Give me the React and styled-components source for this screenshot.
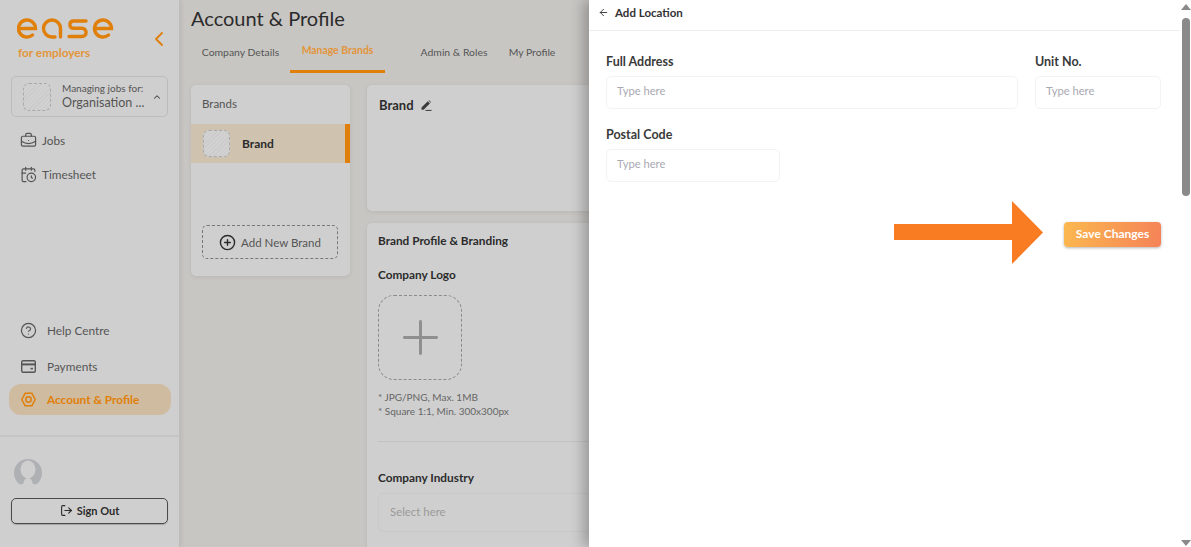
import styled, { createGlobalStyle } from "styled-components";
import { ArrowLeft, BriefcaseBusiness, CalendarClock, ChevronLeft, ChevronUp, CircleHelp, CirclePlus, LogOut, Plus } from "lucide-react";

const GlobalStyle = createGlobalStyle`
    html, body {
        margin: 0;
        height: 100%;
        overflow: hidden;
    }
    body {
        font-family: "Lato", "Noto Sans", "Liberation Sans", sans-serif;
        color: #2b2b2b;
    }
    * {
        box-sizing: border-box;
    }
`;

const Page = styled.div`
    position: relative;
    display: flex;
    width: 100%;
    height: 100vh;
    overflow: hidden;
    background: #c8c6c3;
`;

const Sidebar = styled.aside`
    flex: 0 0 180px;
    min-width: 0;
    display: flex;
    flex-direction: column;
    background: #cfcfcf;
    border-right: 1px solid #bdbdbd;
    box-shadow: 2px 0 4px rgba(0, 0, 0, 0.06);
`;

const LogoArea = styled.div`
    display: flex;
    justify-content: space-between;
    align-items: flex-start;
    height: 76px;
    padding: 18px 8px 0 17px;
`;

const LogoText = styled.div`
    display: flex;
    flex-direction: column;
    gap: 7px;
`;

const LogoSub = styled.div`
    font-size: 11.8px;
    line-height: 14px;
    font-weight: 700;
    color: #e2953a;
    margin-left: 1px;
`;

const CollapseButton = styled.div`
    display: flex;
    color: #e07f0a;
    margin-top: 9px;
`;

const OrgCard = styled.div`
    display: flex;
    align-items: center;
    gap: 11px;
    height: 41px;
    margin: 0 11px;
    padding: 0 5px 0 11px;
    border: 1px solid #bcbcbc;
    border-radius: 5px;
`;

const Placeholder = styled.div`
    flex: none;
    width: ${(p) => p.size}px;
    height: ${(p) => p.size}px;
    border: 1px dashed #a9a9a9;
    border-radius: 6px;
    background: repeating-linear-gradient(135deg, #cbcbcb 0 1px, #d1d1d1 1px 3px);
`;

const OrgText = styled.div`
    flex: 1;
    min-width: 0;
    padding-bottom: 2px;
    white-space: nowrap;
    color: #555;
`;

const OrgLabel = styled.div`
    font-size: 10px;
    line-height: 13px;
`;

const OrgName = styled.div`
    font-size: 12.5px;
    line-height: 15px;
`;

const NavList = styled.nav`
    display: flex;
    flex-direction: column;
    margin-top: ${(p) => p.top}px;
`;

const NavItem = styled.div`
    display: flex;
    align-items: center;
    gap: ${(p) => p.gap}px;
    height: ${(p) => p.height}px;
    margin: 0 8px 0 9px;
    padding-left: 11px;
    border-radius: 12px;
    font-size: 11.8px;
    font-weight: ${(p) => (p.active ? 700 : 400)};
    color: ${(p) => (p.active ? "#e07f0a" : "#555")};
    background: ${(p) => (p.active ? "#cfbb9f" : "transparent")};
`;

const UserArea = styled.div`
    margin-top: 20px;
    padding: 22px 11px 0 11px;
    border-top: 2px solid #c5c5c5;
`;

const Avatar = styled.div`
    display: flex;
    width: 28px;
    height: 28px;
    margin-left: 3px;
    margin-bottom: 11px;
    border-radius: 50%;
    overflow: hidden;
`;

const SignOut = styled.div`
    display: flex;
    align-items: center;
    justify-content: center;
    gap: 4px;
    height: 26px;
    padding-bottom: 1px;
    border: 1px solid #4a4a4a;
    border-radius: 5px;
    box-shadow: 0 1px 1px rgba(0, 0, 0, 0.2);
    font-size: 11px;
    font-weight: 700;
    color: #2b2b2b;
`;

const Main = styled.main`
    flex: 0 0 700px;
    padding: 6px 0 0 11px;
`;

const Title = styled.h1`
    margin: 0;
    font-size: 20px;
    font-weight: 400;
    line-height: 24px;
    color: #2b2b2b;
`;

const Tabs = styled.div`
    display: flex;
    height: 43px;
    margin-bottom: 12px;
`;

const Tab = styled.div`
    display: flex;
    justify-content: center;
    width: ${(p) => p.width}px;
    margin-left: ${(p) => p.left || 0}px;
    padding-top: ${(p) => (p.active ? 14 : 16)}px;
    border-bottom: 3px solid ${(p) => (p.active ? "#e07f0a" : "transparent")};
    font-size: 10.4px;
    white-space: nowrap;
    font-weight: ${(p) => (p.active ? 700 : 400)};
    color: ${(p) => (p.active ? "#e2953a" : "#555")};
`;

const Columns = styled.div`
    display: flex;
    gap: 17px;
    align-items: flex-start;
`;

const BrandsCard = styled.section`
    display: flex;
    flex-direction: column;
    flex: 0 0 159px;
    height: 191px;
    border-radius: 5px;
    background: #cfcfcf;
    box-shadow: 0 1px 4px rgba(0, 0, 0, 0.08);
`;

const BrandsTitle = styled.div`
    height: 39px;
    padding: 12px 0 0 11px;
    font-size: 11.5px;
    color: #555;
`;

const BrandRow = styled.div`
    display: flex;
    align-items: center;
    gap: 12px;
    height: 39px;
    padding-left: 12px;
    border-right: 5px solid #e07f0a;
    background: #cfc3b0;
    font-size: 12px;
    font-weight: 700;
`;

const AddBrand = styled.div`
    display: flex;
    align-items: center;
    justify-content: center;
    gap: 5px;
    height: 34px;
    margin: auto 12px 17px 11px;
    border: 1.5px dashed #777;
    border-radius: 5px;
    font-size: 11.5px;
    color: #555;
`;

const RightColumn = styled.div`
    flex: 1;
    display: flex;
    flex-direction: column;
    gap: 12px;
`;

const Card = styled.section`
    padding: ${(p) => p.pad}px 12px 0 11px;
    height: ${(p) => p.height}px;
    border-radius: 5px;
    background: #cfcfcf;
    box-shadow: 0 1px 4px rgba(0, 0, 0, 0.08);
`;

const BrandName = styled.div`
    display: flex;
    align-items: center;
    gap: 7px;
    padding-left: 1px;
    font-size: 13px;
    font-weight: 700;
`;

const SectionTitle = styled.div`
    margin-bottom: ${(p) => p.bottom}px;
    font-size: 11.8px;
    line-height: 14px;
    font-weight: 700;
`;

const Upload = styled.div`
    display: flex;
    align-items: center;
    justify-content: center;
    width: 84px;
    height: 85px;
    border: 1.5px dashed #8a8a8a;
    border-radius: 16px;
    color: #8f8f8f;
`;

const Hint = styled.div`
    margin-top: 10px;
    font-size: 10px;
    line-height: 14px;
    color: #666;
`;

const Divider = styled.div`
    height: 1px;
    margin: 23px 0 29px;
    background: #c2c2c2;
`;

const SelectBox = styled.div`
    display: flex;
    align-items: center;
    height: 39px;
    padding: 0 0 2px 11px;
    border: 1px solid #c9c9c9;
    border-radius: 5px;
    font-size: 11.4px;
    color: #9a9a9a;
`;

const Drawer = styled.aside`
    position: absolute;
    top: 0;
    right: 0;
    bottom: 0;
    width: 602px;
    display: flex;
    background: #fff;
    box-shadow: -6px 0 12px rgba(0, 0, 0, 0.25);
`;

const DrawerBody = styled.div`
    flex: 1;
    position: relative;
`;

const DrawerHeader = styled.header`
    display: flex;
    align-items: center;
    gap: 6px;
    height: 31px;
    padding: 0 0 5px 9px;
    border-bottom: 1px solid #eeeeee;
    font-size: 11.5px;
    font-weight: 700;
    color: #333;
`;

const Form = styled.div`
    display: flex;
    flex-direction: column;
    gap: 18px;
    padding: 23px 19px 0 17px;
`;

const FormRow = styled.div`
    display: flex;
    gap: 17px;
`;

const Field = styled.div`
    display: flex;
    flex-direction: column;
    gap: 7px;
    flex: ${(p) => (p.width ? `0 0 ${p.width}px` : 1)};
`;

const FieldLabel = styled.label`
    font-size: 12.5px;
    line-height: 15px;
    font-weight: 700;
    color: #3a3a3a;
`;

const FakeInput = styled.div`
    display: flex;
    align-items: center;
    height: 33px;
    padding: 0 0 4px 10px;
    border: 1px solid #f3f3f5;
    border-radius: 5px;
    font-size: 11.2px;
    color: #a9a9b2;
`;

const Actions = styled.div`
    display: flex;
    justify-content: flex-end;
    padding: 40px 19px 0 0;
`;

const SaveButton = styled.button`
    width: 97px;
    height: 25px;
    padding: 0 0 2px;
    border: none;
    border-radius: 4px;
    background: linear-gradient(100deg, #fbb84f, #f58258);
    box-shadow: 0 1px 3px rgba(0, 0, 0, 0.3);
    font: 700 12px "Lato", "Noto Sans", sans-serif;
    color: #fff;
`;

const PointerArrow = styled.svg`
    position: absolute;
    left: 305px;
    top: 201px;
`;

const Scrollbar = styled.div`
    flex: 0 0 11px;
    display: flex;
    flex-direction: column;
    align-items: center;
    padding: 4px 0 0;
    background: #fff;
`;

const ScrollUp = styled.div`
    width: 0;
    height: 0;
    border-left: 5px solid transparent;
    border-right: 5px solid transparent;
    border-bottom: 6px solid #8a8a8a;
`;

const ScrollDown = styled(ScrollUp)`
    margin-top: auto;
    margin-bottom: 1px;
    border-bottom: none;
    border-top: 6px solid #8a8a8a;
`;

const ScrollThumb = styled.div`
    width: 8px;
    height: 178px;
    margin-top: 8px;
    border-radius: 4px;
    background: #8a8a8a;
`;

const Logo = () => (
    <svg width="97" height="21" viewBox="0 0 97 21" fill="none" stroke="#e07f0a" strokeWidth="3.4" strokeLinecap="round">
        <path d="M2 10.5H18.5A8.5 8.5 0 1 0 15.5 17" />
        <path d="M43.5 19V10.5A8.5 8.5 0 1 0 35 19H38" />
        <path d="M69 3H56A3.7 3.7 0 0 0 56 10.3H65A3.9 3.9 0 0 1 65 18.5H52" />
        <path d="M77.5 10.5H94.5A8.5 8.5 0 1 0 91.5 17" />
    </svg>
);

const PaymentsIcon = () => (
    <svg width="17" height="17" viewBox="0 0 17 17" fill="none" stroke="currentColor" strokeWidth="1.4">
        <rect x="1.7" y="2.7" width="13.6" height="11.6" rx="1.5" />
        <path d="M1.7 6.4H15.3" strokeWidth="2" />
        <path d="M10.5 10.6H13" strokeWidth="1.6" />
    </svg>
);

const AccountIcon = () => (
    <svg width="17" height="17" viewBox="0 0 17 17" fill="none" stroke="currentColor" strokeWidth="1.5" strokeLinejoin="round">
        <path d="M5.2 2.2H11.8L15.2 8.5L11.8 14.8H5.2L1.8 8.5Z" />
        <circle cx="8.5" cy="8.5" r="2.7" />
    </svg>
);

const EditIcon = () => (
    <svg width="11" height="11" viewBox="0 0 11 11" fill="#3a3a3a">
        <path d="M0.5 7.6L6.8 1.3L8.9 3.4L2.6 9.7H0.5Z" />
        <path d="M7.5 0.6L8.1 0.2L10 2.1L9.6 2.7Z" />
        <rect x="4.5" y="9.9" width="6" height="1" />
    </svg>
);

const AvatarIcon = () => (
    <svg width="28" height="28" viewBox="0 0 28 28">
        <rect width="28" height="28" fill="#aeb0b3" />
        <ellipse cx="14" cy="10.5" rx="7.5" ry="9" fill="#cfcfcf" />
        <path d="M9 28C9 22 11 19 14 19S19 22 19 28Z" fill="#cfcfcf" />
        <rect y="25" width="28" height="3" fill="#cfcfcf" />
    </svg>
);

const App = () => {
    return (
        <>
            <GlobalStyle />
            <Page>
                <Sidebar>
                    <LogoArea>
                        <LogoText>
                            <Logo />
                            <LogoSub>for employers</LogoSub>
                        </LogoText>
                        <CollapseButton>
                            <ChevronLeft size={24} strokeWidth={1.8} />
                        </CollapseButton>
                    </LogoArea>
                    <OrgCard>
                        <Placeholder size={28} />
                        <OrgText>
                            <OrgLabel>Managing jobs for:</OrgLabel>
                            <OrgName>Organisation ...</OrgName>
                        </OrgText>
                        <ChevronUp size={10} strokeWidth={2.5} color="#444" />
                    </OrgCard>
                    <NavList top={6}>
                        <NavItem height={34} gap={5}>
                            <BriefcaseBusiness size={17} strokeWidth={1.7} />
                            Jobs
                        </NavItem>
                        <NavItem height={34} gap={5}>
                            <CalendarClock size={17} strokeWidth={1.7} />
                            Timesheet
                        </NavItem>
                    </NavList>
                    <NavList top={122}>
                        <NavItem height={35} gap={10}>
                            <CircleHelp size={17} strokeWidth={1.7} />
                            Help Centre
                        </NavItem>
                        <NavItem height={36} gap={10}>
                            <PaymentsIcon />
                            Payments
                        </NavItem>
                        <NavItem active height={31} gap={10}>
                            <AccountIcon />
                            Account & Profile
                        </NavItem>
                    </NavList>
                    <UserArea>
                        <Avatar>
                            <AvatarIcon />
                        </Avatar>
                        <SignOut>
                            <LogOut size={13} strokeWidth={2} />
                            Sign Out
                        </SignOut>
                    </UserArea>
                </Sidebar>
                <Main>
                    <Title>Account & Profile</Title>
                    <Tabs>
                        <Tab width={99}>Company Details</Tab>
                        <Tab active width={95}>Manage Brands</Tab>
                        <Tab width={80} left={29}>Admin & Roles</Tab>
                        <Tab width={50} left={13}>My Profile</Tab>
                    </Tabs>
                    <Columns>
                        <BrandsCard>
                            <BrandsTitle>Brands</BrandsTitle>
                            <BrandRow>
                                <Placeholder size={27} />
                                Brand
                            </BrandRow>
                            <AddBrand>
                                <CirclePlus size={17} strokeWidth={2} color="#2b2b2b" />
                                Add New Brand
                            </AddBrand>
                        </BrandsCard>
                        <RightColumn>
                            <Card pad={12} height={126}>
                                <BrandName>
                                    Brand
                                    <EditIcon />
                                </BrandName>
                            </Card>
                            <Card pad={11} height={360}>
                                <SectionTitle bottom={20}>Brand Profile & Branding</SectionTitle>
                                <SectionTitle bottom={13}>Company Logo</SectionTitle>
                                <Upload>
                                    <Plus size={55} strokeWidth={1.3} />
                                </Upload>
                                <Hint>
                                    * JPG/PNG, Max. 1MB
                                    <br />
                                    * Square 1:1, Min. 300x300px
                                </Hint>
                                <Divider />
                                <SectionTitle bottom={8}>Company Industry</SectionTitle>
                                <SelectBox>Select here</SelectBox>
                            </Card>
                        </RightColumn>
                    </Columns>
                </Main>
                <Drawer>
                    <DrawerBody>
                        <DrawerHeader>
                            <ArrowLeft size={11} strokeWidth={2} />
                            Add Location
                        </DrawerHeader>
                        <Form>
                            <FormRow>
                                <Field>
                                    <FieldLabel>Full Address</FieldLabel>
                                    <FakeInput>Type here</FakeInput>
                                </Field>
                                <Field width={126}>
                                    <FieldLabel>Unit No.</FieldLabel>
                                    <FakeInput>Type here</FakeInput>
                                </Field>
                            </FormRow>
                            <FormRow>
                                <Field width={174}>
                                    <FieldLabel>Postal Code</FieldLabel>
                                    <FakeInput>Type here</FakeInput>
                                </Field>
                            </FormRow>
                        </Form>
                        <Actions>
                            <SaveButton>Save Changes</SaveButton>
                        </Actions>
                        <PointerArrow width="150" height="64" viewBox="0 0 150 64">
                            <path d="M0 23H118V0L149 31.5L118 63V39H0Z" fill="#f97b22" />
                        </PointerArrow>
                    </DrawerBody>
                    <Scrollbar>
                        <ScrollUp />
                        <ScrollThumb />
                        <ScrollDown />
                    </Scrollbar>
                </Drawer>
            </Page>
        </>
    );
};

export default App;
